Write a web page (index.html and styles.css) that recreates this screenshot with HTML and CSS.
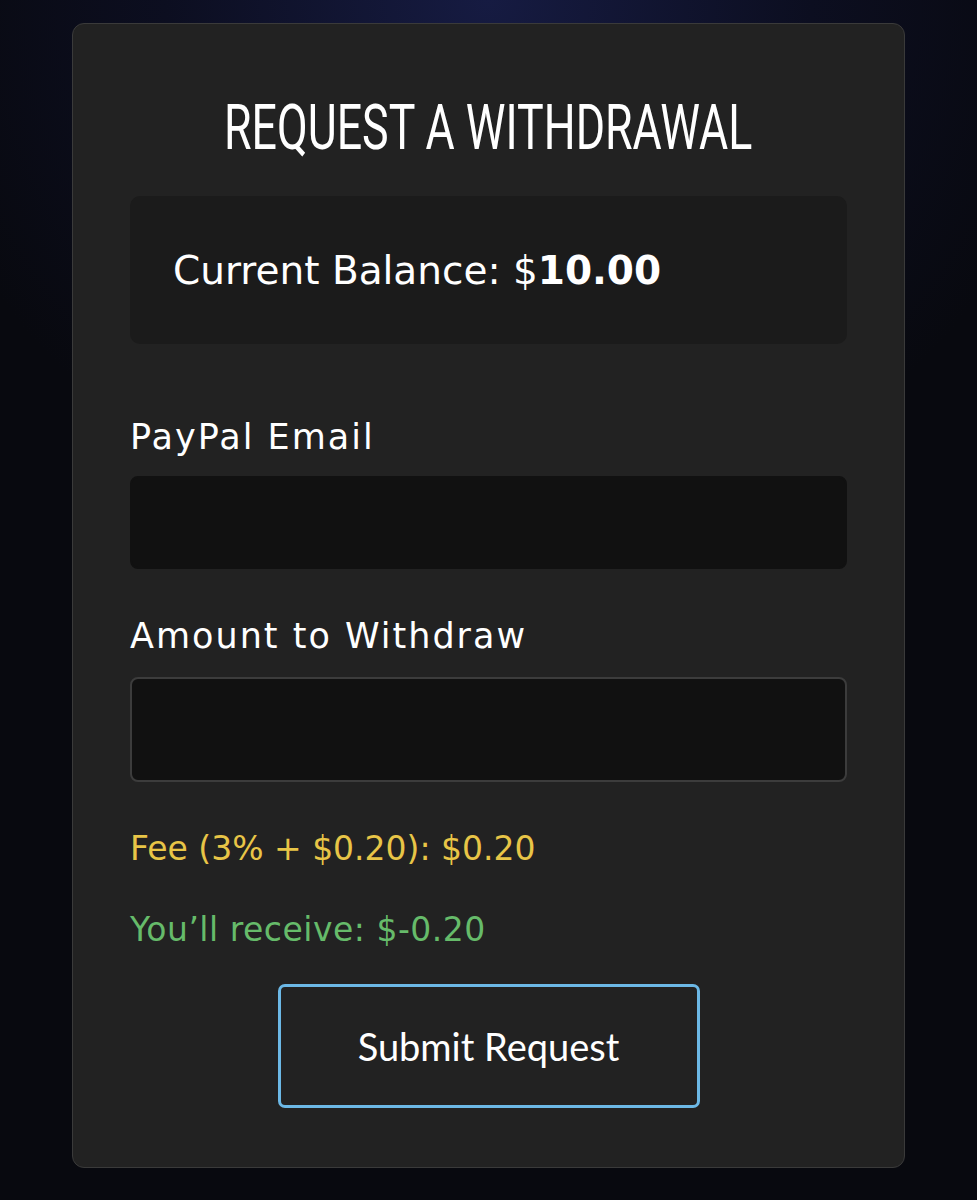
FILE: index.html
```html
<!DOCTYPE html>
<html lang="en">
<head>
<meta charset="UTF-8">
<meta name="viewport" content="width=device-width, initial-scale=1.0">
<title>Request a Withdrawal</title>
<link rel="stylesheet" href="styles.css">
</head>
<body>
<div class="card">
    <h1 class="title"><span>REQUEST A WITHDRAWAL</span></h1>
    <div class="balance">Current Balance: $<b>10.00</b></div>

    <form class="withdraw-form">
        <label class="field-label" for="email">PayPal Email</label>
        <input class="field-input" type="email" id="email">

        <label class="field-label" for="amount">Amount to Withdraw</label>
        <input class="field-input focused" type="number" id="amount">

        <p class="fee">Fee (3% + $0.20): $0.20</p>
        <p class="receive">You’ll receive: $-0.20</p>

        <button class="submit" type="button">Submit Request</button>
    </form>
</div>
</body>
</html>
```

FILE: styles.css
```css
body {
    margin: 0;
    min-height: 1200px;
    font-family: "DejaVu Sans", "Noto Sans", sans-serif;
    color: #fff;
    background: radial-gradient(ellipse 60% 45% at 50% 0%, #161b42 0%, #0c0e20 55%, #08090f 100%);
    background-color: #08090f;
}

.card {
    width: 717px;
    margin: 23px auto 0;
    padding: 0 57px 59px;
    background-color: #222;
    border: 1px solid #3a3a3a;
    border-radius: 12px;
}

/* condensed headline, the narrow face is squeezed from Roboto */
.title {
    margin: 0;
    padding-top: 64px;
    height: 86px;
    display: flex;
    justify-content: center;
    font-family: Roboto, "Liberation Sans", sans-serif;
    font-weight: 400;
    font-size: 63px;
    line-height: 80px;
}

.title span {
    flex-shrink: 0;
    transform: scaleX(0.71);
    white-space: nowrap;
}

.balance {
    margin-top: 22px;
    height: 148px;
    padding: 0 43px;
    display: flex;
    align-items: center;
    background-color: #1b1b1b;
    border-radius: 10px;
    font-size: 39px;
}

.balance b {
    font-weight: 700;
}

.withdraw-form {
    display: flex;
    flex-direction: column;
}

.field-label {
    margin-top: 70px;
    font-size: 35px;
    line-height: 46px;
    letter-spacing: 2px;
}

.field-input {
    margin-top: 16px;
    height: 93px;
    box-sizing: border-box;
    background-color: #111;
    border: 2px solid #111;
    border-radius: 8px;
    color: #fff;
    outline: none;
}

.field-input + .field-label {
    margin-top: 44px;
}

.field-input.focused {
    margin-top: 18px;
    height: 105px;
    border-color: #3c3c3c;
}

.fee,
.receive {
    margin: 0;
    font-size: 33px;
    line-height: 44px;
}

.fee {
    margin-top: 45px;
    color: #e8c547;
}

.receive {
    margin-top: 37px;
    color: #66bb6a;
    letter-spacing: 0.5px;
}

.submit {
    align-self: center;
    margin-top: 32px;
    width: 422px;
    height: 124px;
    background-color: transparent;
    border: 3px solid #6cb8e6;
    border-radius: 7px;
    color: #fff;
    font-family: Lato, sans-serif;
    font-size: 38px;
    cursor: pointer;
}
```
